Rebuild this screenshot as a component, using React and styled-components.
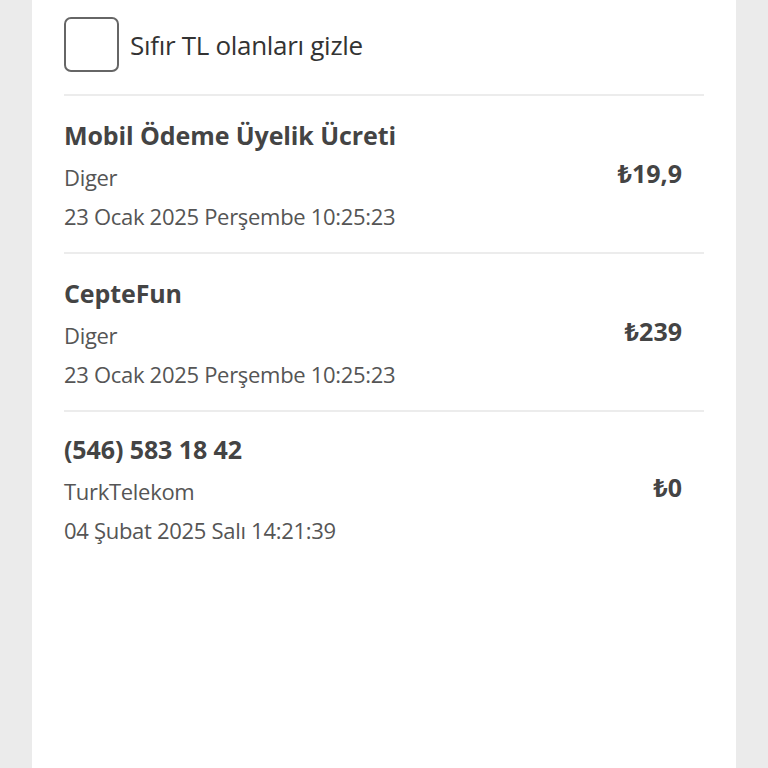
import React from 'react'
import styled, { createGlobalStyle } from 'styled-components'

const GlobalStyle = createGlobalStyle`
  html, body {
    margin: 0;
    padding: 0;
    background: #ebebeb;
  }
  body {
    font-family: "Open Sans", "Noto Sans", sans-serif;
  }
`

const items = [
  { title: 'Mobil Ödeme Üyelik Ücreti', operator: 'Diger', date: '23 Ocak 2025 Perşembe 10:25:23', amount: '19,9' },
  { title: 'CepteFun', operator: 'Diger', date: '23 Ocak 2025 Perşembe 10:25:23', amount: '239' },
  { title: '(546) 583 18 42', operator: 'TurkTelekom', date: '04 Şubat 2025 Salı 14:21:39', amount: '0' },
]

function App() {
  return (
    <>
      <GlobalStyle />
      <Panel>
        <FilterRow>
          <CheckBox type="button" aria-label="Sıfır TL olanları gizle" />
          <FilterLabel>Sıfır TL olanları gizle</FilterLabel>
        </FilterRow>
        <List>
          {items.map((item, i) => (
            <Row key={i}>
              <Info>
                <Title>{item.title}</Title>
                <Meta>{item.operator}</Meta>
                <Meta>{item.date}</Meta>
              </Info>
              <Amount>₺{item.amount}</Amount>
            </Row>
          ))}
        </List>
      </Panel>
    </>
  )
}

export default App

const Panel = styled.div`
  width: 704px;
  min-height: 768px;
  margin: 0 auto 0 32px;
  background: #ffffff;
  padding: 17px 32px 0 32px;
  box-sizing: border-box;
`

const FilterRow = styled.div`
  display: flex;
  align-items: center;
  gap: 11px;
  height: 55px;
  padding-bottom: 22px;
  border-bottom: 2px solid #ececec;
`

const CheckBox = styled.button`
  width: 55px;
  height: 55px;
  box-sizing: border-box;
  border: 2px solid #666666;
  border-radius: 7px;
  background: #ffffff;
  padding: 0;
  flex-shrink: 0;
`

const FilterLabel = styled.span`
  font-size: 26px;
  color: #333333;
  letter-spacing: -0.3px;
`

const List = styled.div`
  display: flex;
  flex-direction: column;
`

const Row = styled.div`
  display: flex;
  align-items: center;
  justify-content: space-between;
  padding: 22px 22px 16px 0;
  border-bottom: 2px solid #ececec;

  &:last-child {
    border-bottom: none;
    padding-top: 20px;
  }
`

const Info = styled.div`
  display: flex;
  flex-direction: column;
`

const Title = styled.div`
  font-size: 25px;
  line-height: 34px;
  font-weight: 700;
  color: #444444;
  letter-spacing: -0.1px;
  margin-bottom: 6px;
`

const Meta = styled.div`
  font-size: 22px;
  line-height: 39px;
  color: #555555;
  letter-spacing: -0.3px;
`

const Amount = styled.div`
  font-size: 25px;
  font-weight: 700;
  color: #444444;
  margin-bottom: 8px;
`
